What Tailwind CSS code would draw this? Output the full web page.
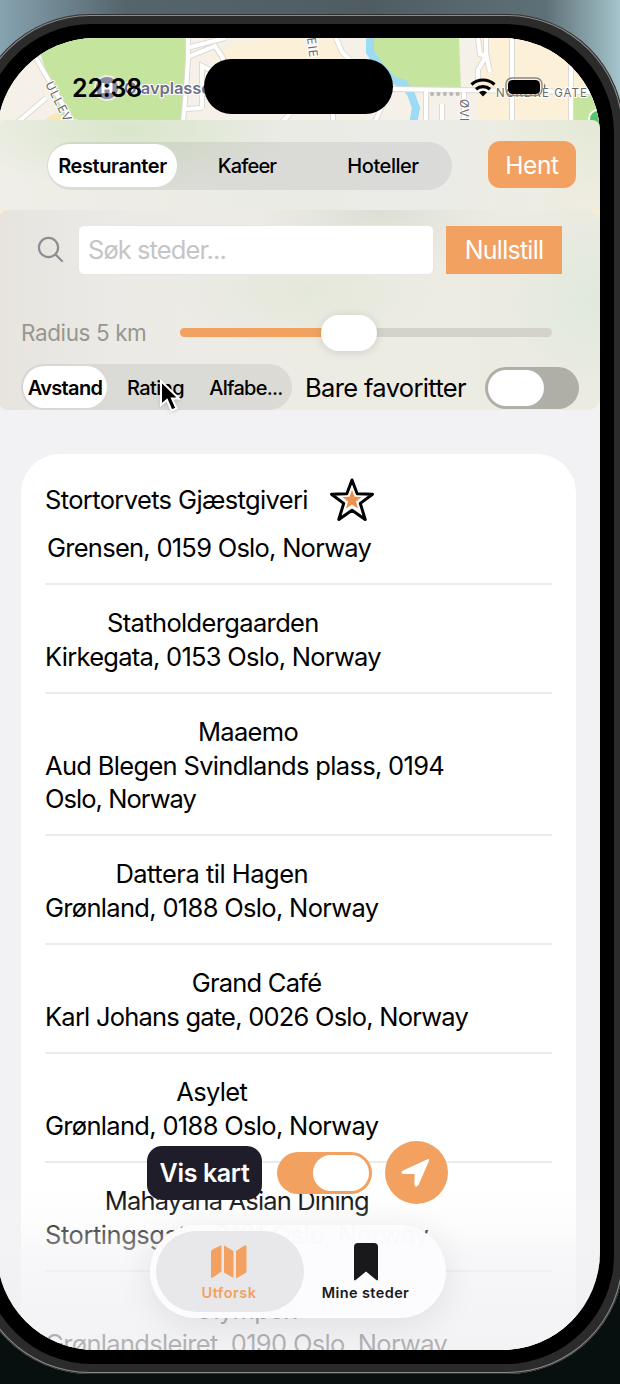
<!DOCTYPE html>
<html lang="no">
<head>
<meta charset="utf-8">
<title>Utforsk</title>
<script src="https://cdn.jsdelivr.net/npm/@tailwindcss/browser@4"></script>
</head>
<body class="h-[1384px] w-[620px] overflow-hidden bg-[linear-gradient(180deg,transparent_0_40%,#07100f_70%),linear-gradient(90deg,#86a3b0_0,#55656c_20%,#4f5d63_60%,#5e7077_88%,#a5c4cb_100%)] font-['Inter',sans-serif] text-black">
<div class="ml-[-27px] mt-[14px] h-[1360px] w-[651px] rounded-[117px] bg-[#2b2b2b] p-[10px] shadow-[inset_0_0_0_1px_#333,inset_0_0_0_2px_#8a8a8a]">
 <div class="h-full rounded-[109px] bg-black p-[14px]">
  <div class="relative h-full overflow-hidden rounded-[98px] bg-[#f2f2f5]">

   <!-- map -->
   <svg class="absolute left-0 top-0" width="603" height="200" viewBox="-3 38 603 200">
    <rect x="-3" y="38" width="603" height="200" fill="#f5f1e8"/>
    <path d="M36 38H187L186 123H268L250 160H72Z" fill="#c5e59f"/>
    <path d="M40 123L55 113L72 118V124H40Z" fill="#fbe6b5"/>
    <path d="M190 82L250 48L305 38H338L350 64V90H190Z" fill="#f7f1e4"/>
    <path d="M268 38H335L346 60H205L232 44Z" fill="#fcf0d8"/>
    <path d="M372 38H459L461 90L410 92L372 66Z" fill="#c5e59f"/>
    <path d="M478 38H600V122H478Z" fill="#fcf0d8"/>
    <path d="M572 98L600 94V124H572Z" fill="#c5e59f"/>
    <path d="M370 38V52L378 64L392 80L404 84L411 94L416 108L413 124" fill="none" stroke="#9ddaf3" stroke-width="8"/>
    <g fill="none" stroke="#dcdad6" stroke-width="6">
     <path d="M36 58L74 124M46 98L18 122M188 38V60L186 90L183 122M187 48L225 38M188 57L215 46L223 58V66M202 108L186 109M202 108V66L214 72M336 38L342 52L352 62M392 89L600 92M426 90V122M442 104V122M464 92V122M478 38L480 54L486 56L478 70V82M486 38V54L490 72M512 38V122M571 38V122M383 104L375 122M333 114V122M290 114L282 122"/>
    </g>
    <g fill="none" stroke="#fff" stroke-width="4">
     <path d="M36 58L74 124M46 98L18 122M188 38V60L186 90L183 122M187 48L225 38M188 57L215 46L223 58V66M202 108L186 109M202 108V66L214 72M336 38L342 52L352 62M392 89L600 92M426 90V122M442 104V122M464 92V122M478 38L480 54L486 56L478 70V82M486 38V54L490 72M512 38V122M571 38V122M383 104L375 122M333 114V122M290 114L282 122"/>
    </g>
    <path d="M432 94H459" stroke="#b9b7b4" stroke-width="4" stroke-linecap="round" stroke-dasharray="0.1 6.3"/>
    <circle cx="107" cy="88" r="12" fill="#8b8ea0" stroke="#eceee8" stroke-width="2"/>
    <path d="M103 83V93M111 83V93M103 88H111" stroke="#fff" stroke-width="3"/>
    <circle cx="598" cy="119" r="9" fill="#5ac46e" stroke="#fff" stroke-width="2"/>
    <g font-family="Inter, sans-serif" fill="#6a6a6c" stroke="#fff" stroke-width="2" paint-order="stroke">
     <text x="124" y="94" font-size="16.5" font-weight="600" textLength="97" fill="#6d7088">Olavplassen</text>
     <text transform="translate(45 84) rotate(63)" font-size="12" letter-spacing="1.3">ULLEVÅL</text>
     <text transform="translate(307 38) rotate(83)" font-size="12" letter-spacing="1">EIE</text>
     <text transform="translate(460 99) rotate(90)" font-size="12" letter-spacing="1">ØVRE</text>
     <text x="496" y="97" font-size="11.5" textLength="91">NORDRE GATE</text>
    </g>
   </svg>

   <!-- status bar -->
   <div class="relative flex h-[82px] items-start pl-[75px]">
    <span class="mt-[34px] w-[132px] text-[25px] leading-[32px] font-semibold tracking-[-0.2px]">22:38</span>
    <div class="mt-[21px] h-[55px] w-[189px] rounded-full bg-black"></div>
    <svg class="ml-[77px] mt-[39px]" width="27" height="20" viewBox="0 0 27 20"><g fill="none" stroke="#000" stroke-width="3.2"><path d="M1.500 7.500A17 17 0 0 1 24.500 7.500"/><path d="M6 12.200A10.500 10.500 0 0 1 20 12.200"/></g><path d="M13 19.500L9 15.300A6 6 0 0 1 17 15.300Z"/></svg>
    <svg class="ml-[8px] mt-[39px]" width="43" height="20" viewBox="0 0 43 20"><rect x="1" y="1" width="36" height="17.500" rx="6" fill="none" stroke="#8a8780" stroke-width="1.400"/><rect x="3" y="3" width="32" height="14" rx="4.500"/><path d="M39 6.500Q42 9.500 39 12.500Z" fill="#77756f"/></svg>
   </div>

   <!-- category picker -->
   <div class="relative flex h-[90px] items-center rounded-t-[8px] bg-[radial-gradient(160px_60px_at_130px_10px,#d8e6ca,transparent),radial-gradient(110px_80px_at_100%_0,#e3ead6,transparent),linear-gradient(90deg,#efeee7,#ebebe5_45%,#ebece8_70%,#efece0)] pl-[50px]">
    <div class="mt-[1px] flex h-[48px] w-[405px] items-center rounded-full bg-[#77777d]/14 pl-[1px] text-[20px]">
     <div class="flex h-[43px] w-[129px] items-center justify-center rounded-full bg-white font-semibold tracking-[-0.4px]">Resturanter</div>
     <div class="w-[140px] text-center font-medium tracking-[-0.8px]">Kafeer</div>
     <div class="w-[132px] text-center font-medium tracking-[-0.45px]">Hoteller</div>
    </div>
    <div class="mb-[1px] ml-[36px] flex h-[47px] w-[88px] items-center justify-center rounded-[12px] bg-[#f2a160] pt-[1px] text-[24.500px] tracking-[-0.4px] text-white">Hent</div>
   </div>

   <!-- filters -->
   <div class="relative bg-[linear-gradient(180deg,#fbeec9,#f2f2f5_30px)]">
   <div class="flex h-[200px] flex-col rounded-[12px] bg-[radial-gradient(130px_60px_at_310px_80px,#e4e8da,transparent),radial-gradient(110px_100px_at_100%_90px,#e0e9dc,transparent),radial-gradient(120px_60px_at_380px_0,#dcdfd5,transparent),linear-gradient(90deg,#e7e4df,#ebeae6_20%,#edece3_60%,#ecebe2)]">
    <div class="mt-[15px] flex h-[50px] items-center pl-[40px]">
     <svg width="28" height="28" viewBox="0 0 28 28" fill="none" stroke="#8d8d92" stroke-width="2.200" stroke-linecap="round"><circle cx="11.500" cy="11.500" r="9.600"/><path d="M18.500 18.500L25 25"/></svg>
     <div class="ml-[13px] flex h-[50px] w-[356px] items-center rounded-[6px] border border-[#e6e6e4] bg-white pl-[9px] text-[25.500px] tracking-[-0.95px] text-[#c5c5c7]"><p class="pt-[1px]">Søk <span class="tracking-[-0.9px]">steder...</span></p></div>
     <div class="ml-[12px] flex h-[48px] w-[116px] items-center justify-center bg-[#f2a160] pt-[1px] text-[25px] tracking-[-0.75px] text-white">Nullstill</div>
    </div>
    <div class="mt-[39px] flex h-[38px] items-center pl-[24px]">
     <span class="w-[159px] text-[22.500px] tracking-[-0.4px] text-[#98978f]">Radius 5 km</span>
     <div class="relative mb-[1px] h-[9px] w-[372px] rounded-full bg-[#d4d3cb]">
      <div class="h-full w-[160px] rounded-full bg-[#f2a160]"></div>
      <div class="absolute left-[141px] top-[-13px] h-[36px] w-[56px] rounded-full bg-white shadow-[0_1px_10px_#0002]"></div>
     </div>
    </div>
    <div class="mt-[13px] flex items-center pl-[24px]">
     <div class="flex h-[46px] w-[271px] items-center rounded-full bg-[#77777d]/14 pl-[2px] text-[20px]">
      <div class="flex h-[42px] w-[84px] items-center justify-center rounded-full bg-white pt-[2px] font-semibold tracking-[-0.65px]">Avstand</div>
      <div class="w-[97px] pt-[2px] text-center font-medium tracking-[-0.6px]">Rating</div>
      <div class="w-[84px] pt-[2px] text-center font-medium tracking-[-0.75px]">Alfabe...</div>
     </div>
     <span class="ml-[13px] w-[180px] pt-[2px] whitespace-nowrap text-[25.500px] tracking-[-0.65px]">Bare favoritter</span>
     <div class="mt-[1px] flex h-[42px] w-[94px] items-center rounded-full bg-[#b0afa7] pl-[3px]"><div class="h-[36px] w-[56px] rounded-full bg-white"></div></div>
    </div>
   </div>
   </div>

   <!-- places -->
   <div class="ml-[24px] mt-[44px] h-[1000px] w-[555px] rounded-[39px] bg-white px-[24px] text-[25.500px] leading-[33.500px] tracking-[-0.68px] whitespace-nowrap">
    <div class="flex h-[131px] flex-col border-b-2 border-[#ebebec]">
     <div class="mt-[20px] flex h-[52px] items-center">
      <span class="w-[284px] tracking-[-0.63px]">Stortorvets Gjæstgiveri</span>
      <svg width="46" height="46" viewBox="0 0 46 46"><path d="M23 3L28.200 16.800L43.500 17.300L31.300 26.400L36.200 42.500L23 33.200L9.800 42.500L14.700 26.400L2.500 17.300L17.800 16.800Z" fill="#fff" stroke="#000" stroke-width="3" stroke-linejoin="round"/><path d="M23 13L25.600 19.800L32.700 20.100L27 24.500L29 31.400L23 27.400L17 31.400L19 24.500L13.300 20.100L20.400 19.800Z" fill="#ee8f4e"/></svg>
     </div>
     <div class="mt-[5px] pl-[2px] tracking-[-0.74px]">Grensen, 0159 Oslo, Norway</div>
    </div>
    <div class="flex h-[109px] flex-col items-start border-b-2 border-[#ebebec] pt-[21px]"><div class="text-center tracking-[-0.74px]"><span class="tracking-[-0.65px]">Statholdergaarden</span><br>Kirkegata, 0153 Oslo, Norway</div></div>
    <div class="flex h-[142px] flex-col items-start border-b-2 border-[#ebebec] pt-[21px]"><div class="w-[406px] text-center">Maaemo<p class="text-left">Aud Blegen Svindlands plass, 0194<br><span class="tracking-[-0.95px]">Oslo, Norway</span></p></div></div>
    <div class="flex h-[109px] flex-col items-start border-b-2 border-[#ebebec] pt-[21px]"><div class="text-center"><span class="tracking-[-0.5px]">Dattera til Hagen</span><br>Grønland, 0188 Oslo, Norway</div></div>
    <div class="flex h-[109px] flex-col items-start border-b-2 border-[#ebebec] pt-[21px]"><div class="text-center tracking-[-0.78px]">Grand Café<br>Karl Johans gate, 0026 Oslo, Norway</div></div>
    <div class="flex h-[109px] flex-col items-start border-b-2 border-[#ebebec] pt-[21px]"><div class="text-center">Asylet<br>Grønland, 0188 Oslo, Norway</div></div>
    <div class="flex h-[109px] flex-col items-start border-b-2 border-[#ebebec] pt-[21px]"><div class="text-center tracking-[-0.45px]"><span class="tracking-[-0.85px]">Mahayana Asian Dining</span><br>Stortingsgata, 0161 Oslo, Norway</div></div>
    <div class="flex h-[109px] flex-col items-start pt-[21px]"><div class="text-center">Olympen<br>Grønlandsleiret, 0190 Oslo, Norway</div></div>
   </div>

   <!-- bottom fade -->
   <div class="absolute inset-x-0 bottom-0 h-[165px] bg-[linear-gradient(180deg,#f1f1f400,#f6f6f84d_25%,#f3f3f699_42%,#f0f0f3b0_70%,#efeff2c0)]"></div>

   <!-- floating controls -->
   <div class="absolute left-[150px] top-[1103px] flex items-center">
    <div class="flex h-[54px] w-[115px] items-center justify-center rounded-[15px] bg-[#1f1d29] pt-[2px] text-[25px] font-semibold tracking-[-0.35px] text-white">Vis kart</div>
    <div class="ml-[15px] flex h-[42px] w-[95px] items-center justify-end rounded-full bg-[#f2a160] pr-[3px]"><div class="h-[36px] w-[56px] rounded-full bg-white"></div></div>
    <div class="ml-[13px] flex h-[63px] w-[63px] items-center justify-center rounded-full bg-[#f2a160]"><svg width="63" height="63" viewBox="0 0 63 63"><path d="M42.500 18.300Q44.800 17.500 44 20L33.500 44Q30.500 47.500 29.500 44V33H18.500Q14.500 32 18 29.500Z" fill="#fff"/></svg></div>
   </div>

   <!-- tab bar -->
   <div class="absolute left-[153px] top-[1187px] flex h-[93px] w-[296px] items-center rounded-full bg-[#fcfcfe]/98 pl-[6px] text-[14.500px] leading-[18px] font-semibold shadow-[0_6px_36px_#00000018]">
    <div class="flex h-[81px] w-[148px] flex-col items-center rounded-full bg-[#e8e8ea] pt-[13px] pr-[2px] text-[#f2a160]">
     <svg width="38" height="36" viewBox="0 0 38 36" fill="currentColor"><path d="M1 8Q1 6.500 2.500 5.500L10.500 1.500Q11.500 1 11.500 2V27.500L3 33.500Q1 34.500 1 32.500Z"/><path d="M14 1.500L23.500 7V34L14 28.500Z"/><path d="M26 7L34.500 1.500Q36.500 .5 36.500 2.500V27Q36.500 28.500 35.500 29L26 34.500Z"/></svg>
     <span class="mt-[4px] tracking-[0.5px]">Utforsk</span>
    </div>
    <div class="flex h-[81px] w-[123px] flex-col items-center pt-[12px] text-[#19191b]">
     <svg width="24" height="38" viewBox="0 0 24 38"><path d="M0 4Q0 0 4 0H20Q24 0 24 4V36Q24 38.500 22 36.800L12 28.500L2 36.800Q0 38.500 0 36Z" fill="currentColor"/></svg>
     <span class="mt-[3px] whitespace-nowrap tracking-[0.4px]">Mine steder</span>
    </div>
   </div>

   <!-- pointer -->
   <svg class="absolute left-[161px] top-[340px] drop-shadow" width="26" height="36" viewBox="0 0 26 36"><path d="M3 3V27L9 22L13.500 32.500L18.500 30.300L14 20.500H21Z" stroke="#fff" stroke-width="2"/></svg>
  </div>
 </div>
</div>
</body>
</html>
